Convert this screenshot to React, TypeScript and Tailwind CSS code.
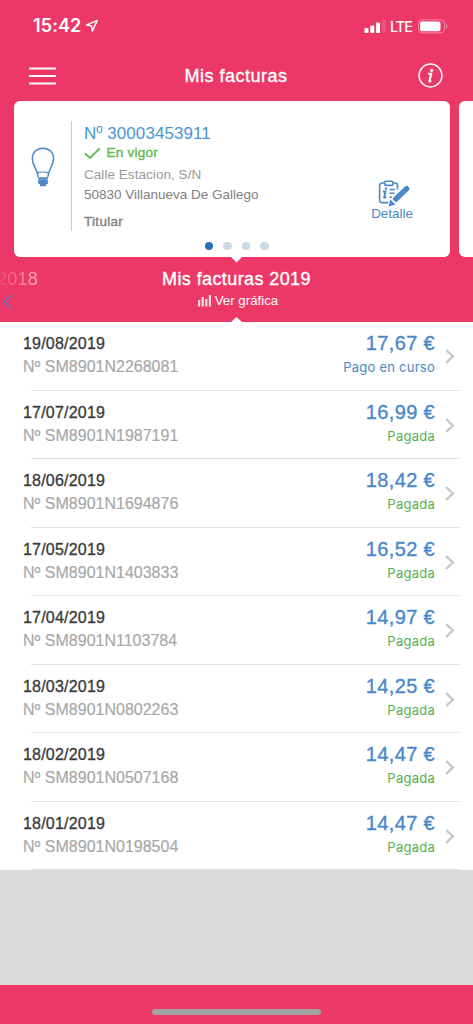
const font = "font-['Liberation_Sans',Arial,sans-serif]";
const medium = '[-webkit-text-stroke:0.35px_currentColor]';

const invoices = [
  { date: '19/08/2019', id: 'SM8901N2268081', amount: '17,67 €', status: 'Pago en curso', paid: false },
  { date: '17/07/2019', id: 'SM8901N1987191', amount: '16,99 €', status: 'Pagada', paid: true },
  { date: '18/06/2019', id: 'SM8901N1694876', amount: '18,42 €', status: 'Pagada', paid: true },
  { date: '17/05/2019', id: 'SM8901N1403833', amount: '16,52 €', status: 'Pagada', paid: true },
  { date: '17/04/2019', id: 'SM8901N1103784', amount: '14,97 €', status: 'Pagada', paid: true },
  { date: '18/03/2019', id: 'SM8901N0802263', amount: '14,25 €', status: 'Pagada', paid: true },
  { date: '18/02/2019', id: 'SM8901N0507168', amount: '14,47 €', status: 'Pagada', paid: true },
  { date: '18/01/2019', id: 'SM8901N0198504', amount: '14,47 €', status: 'Pagada', paid: true },
];

type Invoice = (typeof invoices)[number];

function StatusBar() {
  return (
    <div className="flex h-[52px] items-center pl-[33px] pr-[25px] font-['Inter',sans-serif]">
      <span className="text-[18px] font-semibold leading-5 tracking-[0.1px]">15:42</span>
      <svg className="ml-[4px]" width="14" height="14" viewBox="0 0 14 14" fill="none" stroke="white" strokeWidth="1.5" strokeLinejoin="round">
        <path d="M12.3 1.4 1.6 6l4.9.9.9 5.1z" />
      </svg>
      <svg className="ml-auto" width="22" height="14" viewBox="0 0 22 14" fill="white">
        <rect x="0.5" y="9" width="4" height="5" rx="1" />
        <rect x="6.3" y="6.5" width="4" height="7.5" rx="1" />
        <rect x="12" y="3.5" width="4" height="10.5" rx="1" />
        <rect x="17.8" y="0.5" width="4" height="13.5" rx="1" opacity="0.15" />
      </svg>
      <span className="ml-[4px] mt-[1px] w-[28px] text-[14.3px] font-medium leading-5 tracking-[-0.9px]">LTE</span>
      <svg width="30" height="15" viewBox="0 0 30 15">
        <rect x="0.5" y="0.8" width="26" height="13" rx="3.6" fill="none" stroke="white" strokeOpacity="0.4" />
        <rect x="2" y="2.4" width="20.5" height="9.8" rx="2" fill="white" />
        <path d="M28 5v4.6c1.7-.6 1.7-4 0-4.6z" fill="white" fillOpacity="0.5" />
      </svg>
    </div>
  );
}

function NavBar() {
  return (
    <div className="grid h-[48px] grid-cols-[1fr_auto_1fr] items-center pl-[29px] pr-[30px]">
      <svg width="27" height="18" viewBox="0 0 27 18" fill="none" stroke="white" strokeWidth="2">
        <path d="M0 1.6h27M0 9.1h27M0 16.6h27" />
      </svg>
      <h1 className={`text-[18px] leading-6 tracking-[0.5px] ${medium}`}>Mis facturas</h1>
      <svg className="-mt-px justify-self-end" width="25" height="25" viewBox="0 0 25 25">
        <circle cx="12.5" cy="12.5" r="11.4" fill="none" stroke="white" strokeWidth="1.5" />
        <circle cx="13.7" cy="7.3" r="1.6" fill="white" />
        <path d="M10 10.8h3.3l-1.9 7.4c0 .7.9.2 1.7-.6M11 10.9l2.2-.2" fill="none" stroke="white" strokeWidth="2" />
      </svg>
    </div>
  );
}

function BulbIcon() {
  return (
    <svg className="mt-[46px] w-[24px] shrink-0" width="24" height="40" viewBox="0 0 24 40" fill="none" stroke="#4a88c9" strokeWidth="1.5">
      <path d="M7.2 30.3C6.6 22 1.3 19 1.3 11.6 1.3 5.2 6 1.2 12 1.2s10.6 4 10.6 10.4C22.6 19 17.4 22 16.8 30.3" />
      <path d="M6 25.8c3-1 9-1 12 0" strokeWidth="1.2" />
      <path d="M7.2 31.3h9.6M7.2 33.6h9.6M7.2 35.9h9.6M9 38.1h6" strokeWidth="2.1" />
    </svg>
  );
}

function DetailIcon() {
  return (
    <svg className="ml-[3px]" width="32" height="27" viewBox="0 0 32 27" fill="none" stroke="#4a88c9" strokeWidth="1.6">
      <path d="M6.5 3H4a2.4 2.4 0 0 0-2.4 2.4v14.8A2.4 2.4 0 0 0 4 22.6h6.5M15.5 3h1.6a2.4 2.4 0 0 1 2.4 2.4v4" />
      <rect x="6.7" y="1.2" width="8.2" height="4.2" rx="1.2" />
      <path d="M11.5 9.5h5.5M11.5 13.3h5M11.5 17.3h2.4" />
      <path d="M5 11.5h2.4L6.3 17.4h2" strokeWidth="2" />
      <circle cx="7.9" cy="8.8" r="1.2" fill="#4a88c9" stroke="none" />
      <path d="m17.6 19.2 11-10.5" strokeWidth="5.4" strokeLinecap="round" />
      <path d="m12.4 19.6 5 4.8-6.9 2z" fill="#4a88c9" stroke="none" />
      <path d="m13 18.1 5.2 5.4" stroke="white" strokeWidth="1" />
    </svg>
  );
}

function ContractCard() {
  return (
    <div className="flex h-[156px]">
      <article className="relative ml-[14px] flex w-[436px] shrink-0 rounded-[6px] bg-white pl-[17px]">
        <BulbIcon />
        <div className="ml-[16px] mt-[20px] h-[110px] w-px bg-[#b9d0e4]" />
        <div className="ml-[12px] w-[240px] whitespace-nowrap pt-[21px] text-[13.5px] text-[#808080]">
          <p className="h-[23px] text-[17px] leading-[23px] tracking-[0.05px] text-[#4a96d2]">Nº 30003453911</p>
          <p className={`flex h-[16px] items-center leading-[16px] tracking-[0.25px] text-[#5cb84e] ${medium}`}>
            <svg className="mr-[5.5px]" width="17" height="13" viewBox="0 0 17 13" fill="none" stroke="#5cb84e" strokeWidth="1.9">
              <path d="m1 6.4 5 4.6L15.8 1.4" />
            </svg>
            En vigor
          </p>
          <p className="mt-[4px] leading-[20px] tracking-[0.05px] text-[#999]">Calle Estacion, S/N</p>
          <p className="leading-[19px]">50830 Villanueva De Gallego</p>
          <p className={`mt-[8px] leading-[20px] tracking-[0.3px] ${medium}`}>Titular</p>
        </div>
        <div className="ml-[46px] flex w-[44px] flex-col items-center pt-[79px] text-[#4a88c9]">
          <DetailIcon />
          <span className="text-[13.4px] leading-[13px]">Detalle</span>
        </div>
        <div className="absolute left-[191px] top-[141px] flex gap-[10.3px]">
          <i className="size-[8.2px] rounded-full bg-[#2d6cbb]" />
          <i className="size-[8.2px] rounded-full bg-[#cbdae8]" />
          <i className="size-[8.2px] rounded-full bg-[#cbdae8]" />
          <i className="size-[8.2px] rounded-full bg-[#cbdae8]" />
        </div>
        <svg className="absolute left-[217px] top-[156px]" width="11" height="6" viewBox="0 0 11 6">
          <path d="M0 0h11L5.5 5.5z" fill="white" />
        </svg>
      </article>
      <div className="ml-[9px] w-[14px] shrink-0 rounded-l-[6px] bg-white" />
    </div>
  );
}

function YearPicker() {
  return (
    <div className="relative flex h-[65px] flex-col items-center pt-[11px]">
      <h2 className={`text-[18px] leading-[23px] tracking-[0.4px] ${medium}`}>Mis facturas 2019</h2>
      <p className="ml-[3px] flex h-[20px] items-center text-[13.3px] leading-[20px]">
        <svg className="mr-[4px]" width="13" height="12" viewBox="0 0 13 12" fill="#ffffffcc">
          <path d="M0 5h2.2v6.5H0zM3.6 2h2.2v9.5H3.6zM7.2 4h2.2v7.5H7.2zM10.8 0h2.2v11.5h-2.2z" />
        </svg>
        Ver gráfica
      </p>
      <div className="absolute left-[-3px] top-[11px]">
        <span className="block bg-gradient-to-r from-[#ec3968] to-[#f8aec2] bg-clip-text text-[18px] leading-[23px] tracking-[0.2px] text-transparent">2018</span>
        <svg className="ml-[6px] mt-[3px]" width="10" height="15" viewBox="0 0 10 15" fill="none" stroke="#5a83c4" strokeWidth="1.4">
          <path d="M8.5.7 1 7.5l7.5 6.8" />
        </svg>
      </div>
      <svg className="absolute bottom-0 left-[231px]" width="11" height="5" viewBox="0 0 11 5">
        <path d="M0 5h11L5.5 0z" fill="white" />
      </svg>
    </div>
  );
}

function InvoiceRow({ invoice }: { invoice: Invoice }) {
  return (
    <li className="flex h-[68.5px] flex-col">
      <div className="flex flex-1 pl-[23px] pr-[18px]">
        <div className="pt-[10px] text-[16px]">
          <p className={`leading-[24px] tracking-[0.2px] text-[#3c3c3c] ${medium}`}>{invoice.date}</p>
          <p className="leading-[22px] text-[#a8a8a8] [-webkit-text-stroke:0.2px_currentColor]">Nº {invoice.id}</p>
        </div>
        <div className="ml-auto pt-[9px] text-right">
          <p className={`text-[20px] leading-[25px] tracking-[0.35px] text-[#4a88c9] ${medium}`}>{invoice.amount}</p>
          <p className={`font-['Inter',sans-serif] text-[13px] leading-[22px] tracking-[0.25px] ${invoice.paid ? 'text-[#55b050]' : 'text-[#4a88c9]'}`}>
            {invoice.status}
          </p>
        </div>
        <svg className="ml-[10px] mt-[27px]" width="10" height="15" viewBox="0 0 10 15" fill="none" stroke="#c8c8c8" strokeWidth="2.4">
          <path d="m1.2 1.2 6.6 6.3-6.6 6.3" />
        </svg>
      </div>
      <div className="ml-[31px] mr-[14px] h-px bg-[#e0e0e0]" />
    </li>
  );
}

export default function App() {
  return (
    <div className={`flex h-[1024px] w-[473px] flex-col overflow-hidden bg-[#dbdbdb] ${font}`}>
      <header className="h-[322px] shrink-0 bg-[#ec3866] text-white">
        <StatusBar />
        <NavBar />
        <div className="h-px" />
        <ContractCard />
        <YearPicker />
      </header>
      <ul className="shrink-0 bg-white">
        {invoices.map((invoice) => (
          <InvoiceRow key={invoice.id} invoice={invoice} />
        ))}
      </ul>
      <footer className="mt-auto flex h-[39px] justify-center bg-[#ec3866] pt-[24px]">
        <div className="h-[6px] w-[169px] rounded-full bg-[#a3a3a3]" />
      </footer>
    </div>
  );
}
